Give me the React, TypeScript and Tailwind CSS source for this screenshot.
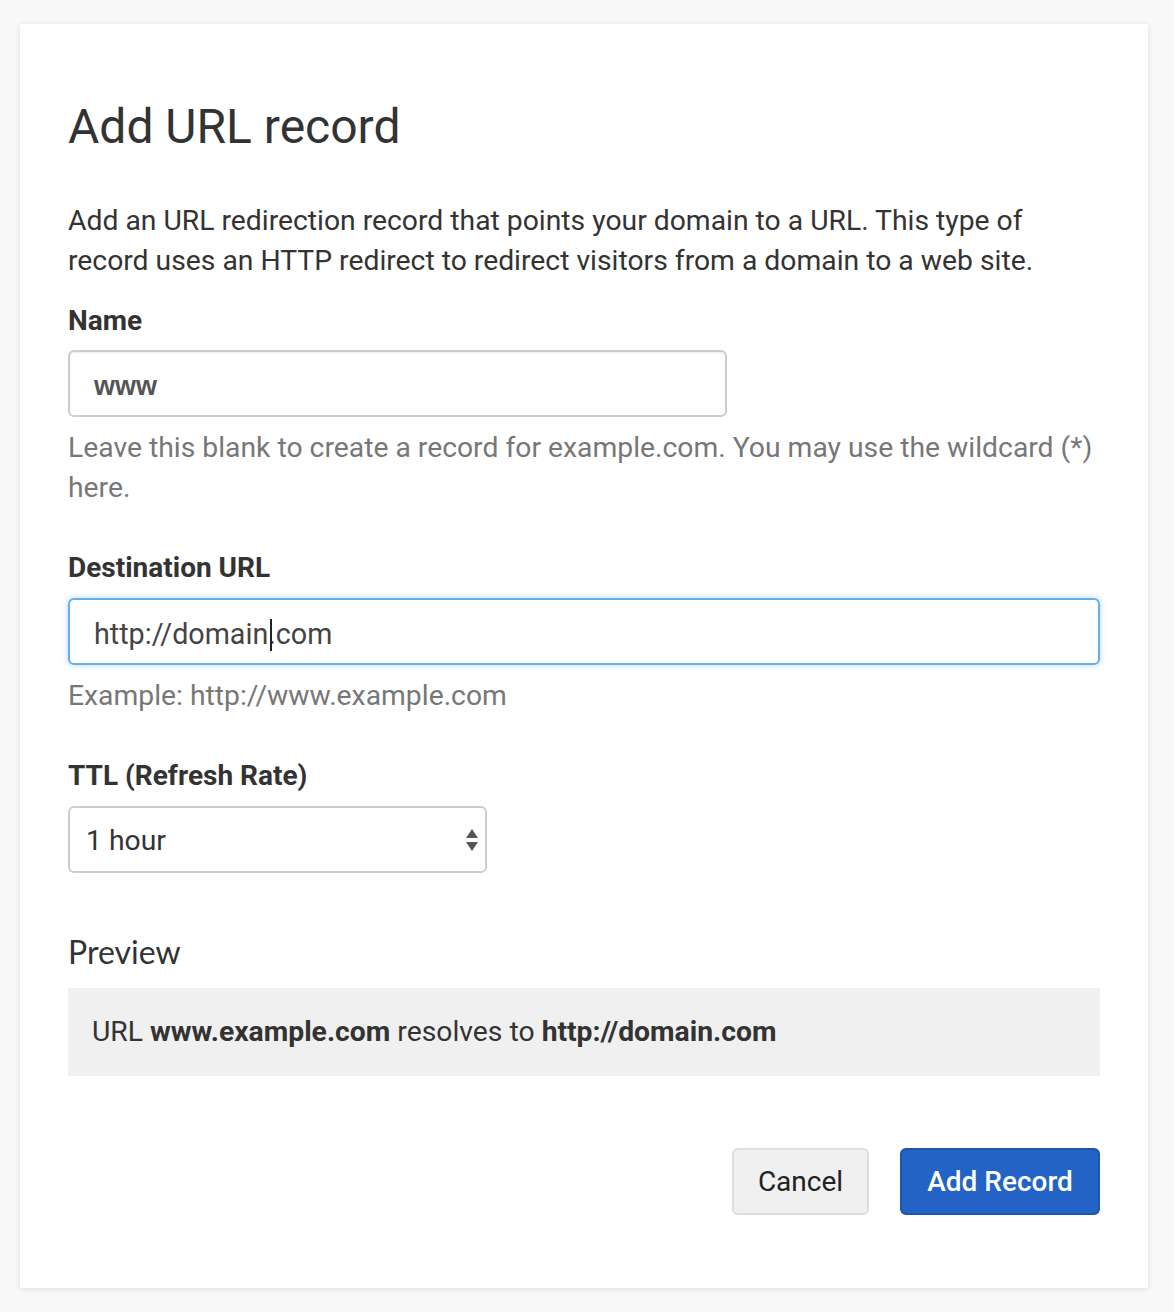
import { useState } from "react";

const TTL_OPTIONS = ["1 minute", "5 minutes", "1 hour", "1 day"];

export default function App() {
  const [name, setName] = useState("www");
  const [url, setUrl] = useState("http://domain.com");
  const [ttl, setTtl] = useState("1 hour");

  return (
    <div className="min-h-[1312px] bg-[#f9f9f9] px-5 pt-6 font-['Roboto',sans-serif] text-[#333]">
      <div className="w-[1128px] bg-white px-12 pb-[73px] pt-[73px] shadow-[0_1px_6px_rgba(0,0,0,0.12)]">
        <h1 className="text-[48px] leading-[60px] font-normal text-[#333]">Add URL record</h1>

        <p className="mt-[44px] text-[28.3px] leading-[40px] text-[#333]">
          Add an URL redirection record that points your domain to a URL. This type of record uses an HTTP
          redirect to redirect visitors from a domain to a web site.
        </p>

        <label className="mt-5 block text-[28px] leading-[40px] font-bold">Name</label>
        <input
          value={name}
          onChange={(e) => setName(e.target.value)}
          className="mt-[9px] block h-[67px] w-[659px] rounded-md border-2 border-[#ccc] bg-white px-6 pt-[6px] font-['Liberation_Sans',sans-serif] text-[27px] font-bold text-[#555] shadow-[inset_0_1px_2px_rgba(0,0,0,0.08)] outline-none"
        />
        <p className="mt-[11px] text-[28.3px] leading-[40px] text-[#777]">
          Leave this blank to create a record for example.com. You may use the wildcard (*) here.
        </p>

        <label className="mt-10 block text-[28px] leading-[40px] font-bold">Destination URL</label>
        <div className="relative mt-[10px] h-[67px]">
          <input
            value={url}
            onChange={(e) => setUrl(e.target.value)}
            className="block h-full w-full rounded-md border-2 border-[#66afe9] bg-white px-6 pt-[4px] text-[28.7px] text-[#444] shadow-[0_0_6px_rgba(102,175,233,0.5)] outline-none"
          />
          {/* text caret after "domain" */}
          <span className="pointer-events-none absolute left-[202px] top-[21px] h-[32px] w-[2px] bg-[#222]" />
        </div>
        <p className="mt-[11px] text-[28.3px] leading-[40px] text-[#777]">Example: http://www.example.com</p>

        <label className="mt-10 block text-[28px] leading-[40px] font-bold">TTL (Refresh Rate)</label>
        <div className="relative mt-[10px] h-[67px] w-[419px]">
          <select
            value={ttl}
            onChange={(e) => setTtl(e.target.value)}
            className="h-full w-full appearance-none rounded-md border-2 border-[#ccc] bg-white pl-4 pr-10 pt-[3px] text-[28.3px] text-[#333] outline-none"
          >
            {TTL_OPTIONS.map((o) => (
              <option key={o}>{o}</option>
            ))}
          </select>
          <svg
            width="14"
            height="24"
            viewBox="0 0 14 24"
            className="pointer-events-none absolute right-[8px] top-1/2 -translate-y-1/2 fill-[#555]"
          >
            <path d="M7 1 L13 10 L1 10 Z" />
            <path d="M1 14 L13 14 L7 23 Z" />
          </svg>
        </div>

        <h2 className="mt-[59px] font-['Lato',sans-serif] text-[32px] leading-[40px] text-[#333]">Preview</h2>
        <div className="mt-4 flex h-[88px] items-center bg-[#f0f0f0] px-6 text-[28.3px] text-[#333]">
          <span>
            URL <b>www.example.com</b> resolves to <b>http://domain.com</b>
          </span>
        </div>

        <div className="mt-[72px] flex justify-end gap-[31px]">
          <button
            type="button"
            className="h-[67px] w-[137px] rounded-md border-2 border-[#ddd] bg-[#f0f0f0] text-[28px] text-[#222]"
          >
            Cancel
          </button>
          <button
            type="button"
            className="h-[67px] w-[200px] rounded-md border-2 border-[#1d55a8] bg-[#2263c5] text-[28px] font-medium text-white"
          >
            Add Record
          </button>
        </div>
      </div>
    </div>
  );
}
